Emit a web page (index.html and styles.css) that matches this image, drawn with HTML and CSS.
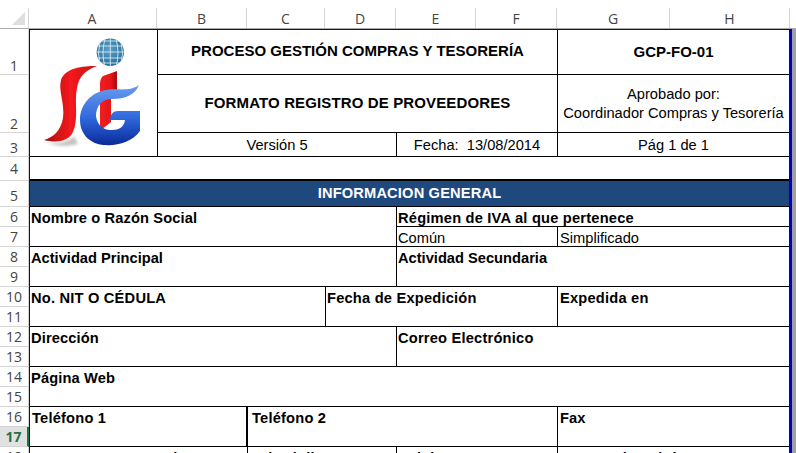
FILE: index.html
```html
<!DOCTYPE html>
<html lang="es">
<head>
<meta charset="utf-8">
<title>Formato Registro de Proveedores</title>
<link rel="stylesheet" href="styles.css">
</head>
<body>
<div class="app">
  <div class="corner"><span class="tri"></span></div>
  <div class="cols">
    <div class="ch">A</div><div class="ch">B</div><div class="ch">C</div><div class="ch">D</div><div class="ch">E</div><div class="ch">F</div><div class="ch">G</div><div class="ch">H</div>
  </div>
  <div class="rows">
    <div class="rh r1h">1</div><div class="rh r2h">2</div><div class="rh r3h">3</div><div class="rh r4h">4</div><div class="rh r5h">5</div>
    <div class="rh">6</div><div class="rh">7</div><div class="rh">8</div><div class="rh">9</div><div class="rh">10</div><div class="rh">11</div><div class="rh">12</div><div class="rh">13</div><div class="rh">14</div><div class="rh">15</div><div class="rh">16</div><div class="rh sel">17</div><div class="rh">18</div>
  </div>
  <div class="sheet">
    <div class="cgrid head">
      <div class="logo">
        <svg width="127" height="126" viewBox="30 30 127 126" xmlns="http://www.w3.org/2000/svg">
          <defs>
            <radialGradient id="gl" cx="0.45" cy="0.4" r="0.7"><stop offset="0" stop-color="#5fa0c8"/><stop offset="1" stop-color="#1c6795"/></radialGradient>
            <linearGradient id="red" x1="0" y1="0" x2="1" y2="0"><stop offset="0" stop-color="#a80c10"/><stop offset="0.5" stop-color="#f41a1c"/><stop offset="1" stop-color="#c41014"/></linearGradient>
            <linearGradient id="iRed" x1="0" y1="0" x2="1" y2="0"><stop offset="0" stop-color="#f02024"/><stop offset="0.6" stop-color="#e81418"/><stop offset="1" stop-color="#a80c10"/></linearGradient>
            <linearGradient id="bl" x1="0" y1="0" x2="0" y2="1"><stop offset="0" stop-color="#6a9cf0"/><stop offset="0.55" stop-color="#2f68dc"/><stop offset="1" stop-color="#0a2a98"/></linearGradient>
            <filter id="soft" x="-10%" y="-10%" width="120%" height="120%"><feGaussianBlur stdDeviation="0.6"/></filter>
            <filter id="shadow" x="-20%" y="-20%" width="140%" height="140%"><feGaussianBlur stdDeviation="1.500"/></filter>
            <clipPath id="gc"><circle cx="110.300" cy="52.300" r="13.700"/></clipPath>
          </defs>
          <circle cx="110.300" cy="52.300" r="13.700" fill="url(#gl)"/>
          <g clip-path="url(#gc)" stroke="#d6eaf4" stroke-width="0.9" fill="none">
            <path d="M96 46h29M96 52h29M96 58h29M98 41h25M98 63h25"/>
            <path d="M110.300 38v29M105 39q-4 14 0 28M116 39q4 14 0 28M100 42q-3 11 0 22M121 42q3 11 0 22"/>
          </g>
          <path d="M46 142C56 144 68 143 74 136L78 144C66 147 54 146 46 142Z" fill="#9a8a8a" opacity="0.55" filter="url(#shadow)"/>
          <g filter="url(#soft)">
            <path d="M97 66C82 66 65 68 61 80C58 90 65 104 63 118C61 130 54 137 44 140C56 143 68 142 73 132C79 118 74 102 77 88C79 76 86 70 97 66Z" fill="url(#red)"/>
            <path d="M103 76L117 71V90H111V122L101 130C100 129 100 128 100 126V84C100 80 101 78 103 76Z" fill="url(#iRed)"/>
            <path d="M139 85C135 95 125 99 112 99C102 99 96 106 96 116C97 125 104 131 112 130C119 130 124 127 125 120L110 120C110 116 112 111 118 111L140 111V131C132 142 118 146 104 145C90 144 80 134 80 120C80 104 92 92 106 90C118 88 130 92 139 85Z" fill="url(#bl)"/>
          </g>
        </svg>
      </div>
      <div class="cell s5 big c r1 hd1 line-b line-r">PROCESO GESTIÓN COMPRAS Y TESORERÍA</div>
      <div class="cell s2 big c r1 line-b">GCP-FO-01</div>
      <div class="cell s5 big c r2 hd1 hd2 line-b line-r">FORMATO REGISTRO DE PROVEEDORES</div>
      <div class="cell s2 c r2 approved line-b">Aprobado por:<br>Coordinador Compras y Tesorería</div>
      <div class="cell s3 c r3 line-r">Versión 5</div>
      <div class="cell s2 c r3 line-r">Fecha:&nbsp; 13/08/2014</div>
      <div class="cell s2 c r3">Pág 1 de 1</div>
    </div>
    <div class="spacer"></div>
    <div class="banner">INFORMACION GENERAL</div>
    <div class="cgrid">
      <div class="cell s4 span2 bold line-b line-r">Nombre o Razón Social</div>
      <div class="cell s4 short bold wide line-b">Régimen de IVA al que pertenece</div>
      <div class="cell s2 short line-b line-r">Común</div>
      <div class="cell s2 short pad2 line-b">Simplificado</div>
    </div>
    <div class="cgrid">
      <div class="cell s4 tall bold tight line-b line-r">Actividad Principal</div>
      <div class="cell s4 tall bold tight line-b">Actividad Secundaria</div>
    </div>
    <div class="cgrid">
      <div class="cell s3 tall bold wide line-b line-r">No. NIT O CÉDULA</div>
      <div class="cell s3 tall bold wide line-b line-r">Fecha de Expedición</div>
      <div class="cell s2 tall bold wide pad2 line-b">Expedida en</div>
    </div>
    <div class="cgrid">
      <div class="cell s4 tall bold line-b line-r">Dirección</div>
      <div class="cell s4 tall bold wide line-b">Correo Electrónico</div>
    </div>
    <div class="cgrid">
      <div class="cell s8 tall bold line-b">Página Web</div>
    </div>
    <div class="cgrid">
      <div class="cell s2 tall bold wide pad2 line-b thick-r">Teléfono 1</div>
      <div class="cell s4 tall bold wide pad4 line-b line-r">Teléfono 2</div>
      <div class="cell s2 tall bold pad2 line-b">Fax</div>
    </div>
    <div class="cgrid">
      <div class="cell s2 tall bold line-r">Representante Legal</div>
      <div class="cell s2 tall bold pad4 line-r">Tel Móvil</div>
      <div class="cell s2 tall bold line-r">Celular</div>
      <div class="cell s2 tall bold pad2">Correo Electrónico</div>
    </div>
  </div>
  <div class="edge"></div>
  <div class="gutter"></div>
</div>
</body>
</html>
```
FILE: styles.css
```css
* { box-sizing: border-box; }
html, body { margin: 0; padding: 0; background: #fff; }
body { width: 796px; height: 453px; overflow: hidden; font-family: "Liberation Sans", Arial, sans-serif; font-size: 14.67px; color: #000; }
.app { display: grid; grid-template-columns: 29px 760px 3px 4px; grid-template-rows: 29px 424px; width: 796px; height: 453px; overflow: hidden; }
.cgrid { display: grid; grid-template-columns: 128px 90px 78px 71px 80px 81px 113px 118px; }
.corner { position: relative; grid-column: 1; grid-row: 1; border-right: 1px solid #d4d4d4; border-bottom: 1px solid #ababab; margin-top: 8px; }
.tri { position: absolute; left: 12px; top: 4px; width: 0; height: 0; border-style: solid; border-width: 0 0 13px 13px; border-color: transparent transparent #dfdfdf transparent; }
.cols { grid-column: 2 / 5; grid-row: 1; margin-top: 8px; margin-left: -1px; border-bottom: 1px solid #ababab; display: grid; grid-template-columns: 129px 90px 78px 71px 80px 81px 113px 120px 1fr; }
.ch { font-family: "Open Sans", sans-serif; font-size: 14px; color: #444; display: flex; align-items: center; justify-content: center; height: 20px; border-right: 1px solid #d4d4d4; }
.rows { grid-column: 1; grid-row: 2; }
.rh { font-family: "Open Sans", sans-serif; font-size: 14px; color: #444; height: 20px; line-height: 19px; display: flex; align-items: flex-end; justify-content: center; border-bottom: 1px solid #d4d4d4; border-right: 1px solid #d4d4d4; }
.r1h { height: 46px; line-height: 17px; }
.r2h { height: 58px; line-height: 17px; }
.r3h { height: 24px; line-height: 17px; }
.r4h { height: 24px; padding-bottom: 2px; }
.r5h { height: 26px; padding-bottom: 1px; }
.sel { background: #e1e1e1; color: #217346; font-weight: 700; border-right: 2px solid #217346; }
.sheet { grid-column: 2; grid-row: 2; border-top: 1px solid #0000c0; border-left: 1px solid #0000c0; overflow: hidden; }
.edge { grid-column: 3; grid-row: 2; background: #0000c0; }
.gutter { grid-column: 4; grid-row: 2; background: #a0a0a0; }
.head { grid-template-rows: 45px 58px 23px; border-bottom: 1px solid #000; }
.logo { grid-row: 1 / 4; border-right: 1px solid #000; }
.logo svg { display: block; }
.cell { padding: 0 1px; min-width: 0; white-space: nowrap; line-height: 20px; overflow: hidden; }
.bold { font-weight: 700; letter-spacing: 0.12px; }
.wide { letter-spacing: 0.2px; }
.tight { letter-spacing: 0; }
.big { font-size: 15px; font-weight: 700; }
.c { display: flex; align-items: center; justify-content: center; text-align: center; }
.s2 { grid-column: span 2; }
.s3 { grid-column: span 3; }
.s4 { grid-column: span 4; }
.s5 { grid-column: span 5; }
.s8 { grid-column: span 8; }
.r1 { height: 45px; }
.r2 { height: 58px; }
.r3 { height: 23px; }
.hd1 { padding-bottom: 2px; }
.hd2 { letter-spacing: 0.13px; }
.approved { line-height: 19px; }
.line-b { border-bottom: 1px solid #000; }
.line-r { border-right: 1px solid #000; }
.thick-r { border-right: 2px solid #000; }
.span2 { grid-row: span 2; height: 40px; padding-top: 1px; }
.short { height: 20px; padding-top: 1px; }
.tall { height: 40px; padding-top: 1px; }
.pad2 { padding-left: 2px; }
.pad4 { padding-left: 4px; }
.spacer { height: 24px; border-bottom: 2px solid #000; }
.banner { height: 26px; background: #1f497d; color: #fff; font-weight: 700; letter-spacing: 0.15px; text-align: center; line-height: 25px; border-bottom: 1px solid #000; }
```
